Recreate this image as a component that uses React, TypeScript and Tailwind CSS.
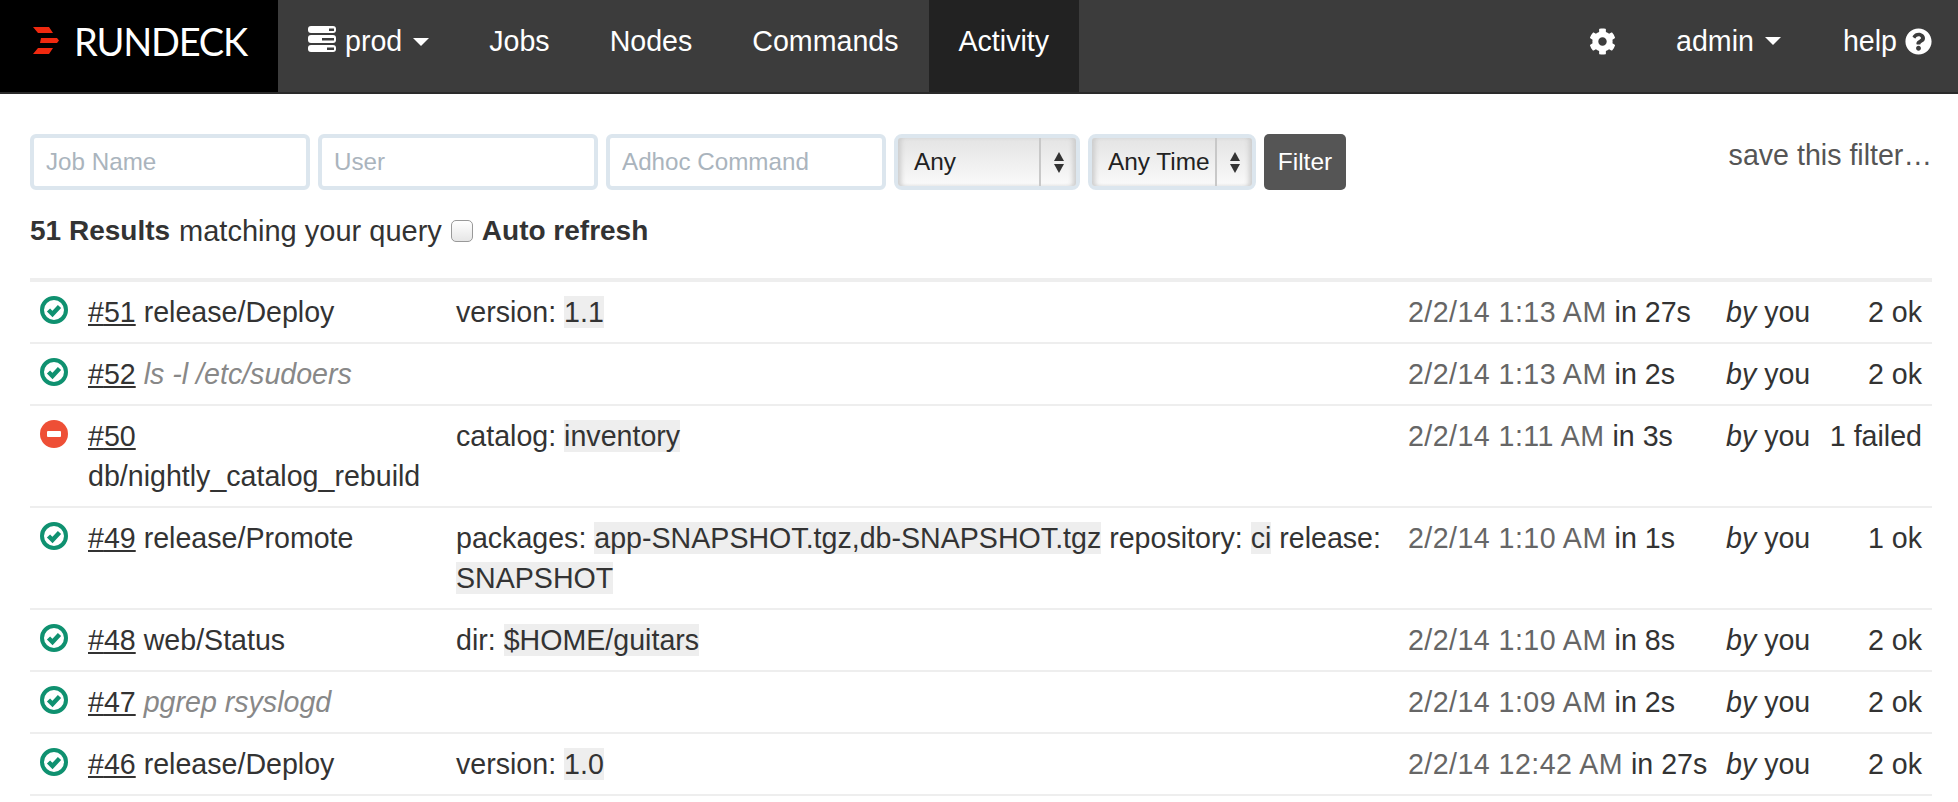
import { FaCog, FaQuestionCircle } from 'react-icons/fa';

const sans = { fontFamily: '"Liberation Sans", Arial, sans-serif' };

type Job = {
  id: number;
  name: string;
  adhoc?: boolean;
  failed?: boolean;
  params?: [string, string][];
  date: string;
  duration: string;
  status: string;
};

const jobs: Job[] = [
  { id: 51, name: 'release/Deploy', params: [['version', '1.1']], date: '2/2/14 1:13 AM', duration: '27s', status: '2 ok' },
  { id: 52, name: 'ls -l /etc/sudoers', adhoc: true, date: '2/2/14 1:13 AM', duration: '2s', status: '2 ok' },
  { id: 50, name: 'db/nightly_catalog_rebuild', failed: true, params: [['catalog', 'inventory']], date: '2/2/14 1:11 AM', duration: '3s', status: '1 failed' },
  {
    id: 49,
    name: 'release/Promote',
    params: [['packages', 'app-SNAPSHOT.tgz,db-SNAPSHOT.tgz'], ['repository', 'ci'], ['release', 'SNAPSHOT']],
    date: '2/2/14 1:10 AM',
    duration: '1s',
    status: '1 ok',
  },
  { id: 48, name: 'web/Status', params: [['dir', '$HOME/guitars']], date: '2/2/14 1:10 AM', duration: '8s', status: '2 ok' },
  { id: 47, name: 'pgrep rsyslogd', adhoc: true, date: '2/2/14 1:09 AM', duration: '2s', status: '2 ok' },
  { id: 46, name: 'release/Deploy', params: [['version', '1.0']], date: '2/2/14 12:42 AM', duration: '27s', status: '2 ok' },
];

function Logo() {
  return (
    <div className="flex h-full w-[278px] shrink-0 items-center bg-black pb-[11px] pl-[33px]">
      <svg width="26" height="27" viewBox="0 0 26 27" className="mr-[15px]">
        <path d="M0 0H16L20 6H5Z M8 11H24L26 13.5L24 16H7Z M5 21H20L16 27H0Z" fill="#f0290f" />
      </svg>
      <span className="text-[38px] leading-none tracking-[-1.2px] text-white" style={{ fontFamily: 'Lato, sans-serif' }}>
        RUNDECK
      </span>
    </div>
  );
}

function Caret() {
  return <span className="ml-[11px] inline-block h-0 w-0 border-x-[8px] border-t-[8px] border-x-transparent border-t-white" />;
}

function ServerIcon() {
  return (
    <svg width="28" height="26" viewBox="0 0 28 26" className="mr-[9px] -translate-y-[3px]">
      <g fill="#fff">
        <rect x="0" y="0" width="28" height="7" rx="3" />
        <rect x="0" y="9" width="28" height="8" rx="3" />
        <rect x="0" y="19" width="28" height="7" rx="3" />
      </g>
      <g fill="#3c3c3c">
        <rect x="21" y="2.5" width="5" height="2.5" />
        <rect x="14" y="12" width="12" height="2.5" />
        <rect x="19" y="21.5" width="7" height="2.5" />
      </g>
    </svg>
  );
}

function NavLink({ label, active }: { label: string; active?: boolean }) {
  return (
    <a className={`flex h-full items-center px-[30px] pb-[9px] ${active ? 'bg-[#222222]' : ''}`}>{label}</a>
  );
}

function Navbar() {
  return (
    <nav className="flex h-[94px] items-stretch border-b-2 border-[#2a2a2a] bg-[#3c3c3c] text-[28.6px] text-white">
      <Logo />
      <a className="flex h-full items-center px-[30px] pb-[9px]">
        <ServerIcon />
        prod
        <Caret />
      </a>
      <NavLink label="Jobs" />
      <NavLink label="Nodes" />
      <NavLink label="Commands" />
      <NavLink label="Activity" active />
      <div className="ml-auto flex h-full items-center pb-[9px]">
        <FaCog size={27} className="mr-[60px]" />
        <a className="mr-[62px] flex items-center">
          admin
          <Caret />
        </a>
        <a className="mr-[26px] flex items-center">
          help
          <FaQuestionCircle size={27} className="ml-[8px]" />
        </a>
      </div>
    </nav>
  );
}

function TextBox({ placeholder }: { placeholder: string }) {
  return (
    <input
      placeholder={placeholder}
      className="h-[56px] w-[280px] rounded-[6px] border-4 border-[#dce6ee] bg-white px-[12px] text-[24.2px] outline-none placeholder:text-[#aab4bd]"
    />
  );
}

function SelectBox({ label, width, divider }: { label: string; width: string; divider: string }) {
  return (
    <div className={`flex h-[56px] rounded-[8px] border-4 border-[#dce6ee] ${width}`}>
      <div className="flex flex-1 rounded-[3px] bg-gradient-to-b from-[#e4e4e4] to-[#fafafa] shadow-[inset_5px_0_5px_-2px_#ccc,inset_-5px_0_5px_-2px_#ccc]">
        <span className={`flex items-center border-r-2 border-[#c8c8c8] pl-[16px] text-[24.4px] text-[#222] ${divider}`}>{label}</span>
        <span className="flex flex-1 flex-col items-center justify-center gap-[3px]">
          <span className="h-0 w-0 border-x-[5px] border-b-[9px] border-x-transparent border-b-[#333]" />
          <span className="h-0 w-0 border-x-[5px] border-t-[9px] border-x-transparent border-t-[#333]" />
        </span>
      </div>
    </div>
  );
}

function FilterBar() {
  return (
    <div className="flex items-start gap-[8px]">
      <TextBox placeholder="Job Name" />
      <TextBox placeholder="User" />
      <TextBox placeholder="Adhoc Command" />
      <SelectBox label="Any" width="w-[186px]" divider="w-[143px]" />
      <SelectBox label="Any Time" width="w-[168px]" divider="w-[125px]" />
      <button className="h-[56px] w-[82px] rounded-[5px] bg-[#555555] text-[24.5px] text-white">Filter</button>
      <a className="ml-auto mt-[1px] text-[28.6px] leading-[40px] text-[#555]">save this filter…</a>
    </div>
  );
}

function StatusIcon({ failed }: { failed?: boolean }) {
  if (failed) {
    return (
      <svg width="28" height="28" viewBox="0 0 28 28" className="mt-[4px] shrink-0">
        <circle cx="14" cy="14" r="14" fill="#ee4f36" />
        <rect x="7" y="11" width="14" height="6" rx="1" fill="#fff" />
      </svg>
    );
  }
  return (
    <svg width="28" height="28" viewBox="0 0 28 28" className="mt-[4px] shrink-0">
      <circle cx="14" cy="14" r="12" fill="none" stroke="#0f9170" strokeWidth="4" />
      <path d="M8.5 14l4 4 7-7.5" fill="none" stroke="#0f9170" strokeWidth="4.5" />
    </svg>
  );
}

function JobRow({ job }: { job: Job }) {
  return (
    <div className="flex border-b-2 border-[#eeeeee] py-[10px] text-[28.6px] leading-[40px] text-[#333]">
      <div className="w-[58px] shrink-0 pl-[10px]">
        <StatusIcon failed={job.failed} />
      </div>
      <div className="w-[368px] shrink-0 pr-[20px]">
        <a className="underline">#{job.id}</a>{' '}
        <span className={job.adhoc ? 'text-[#888] italic' : ''}>{job.name}</span>
      </div>
      <div className="w-[952px] shrink-0 pr-[20px]">
        {job.params?.map(([key, value]) => (
          <span key={key}>
            {key}: <span className="bg-[#eeeeee]">{value}</span>{' '}
          </span>
        ))}
      </div>
      <div className="w-[318px] shrink-0">
        <span className="tracking-[0.45px] text-[#666]">{job.date}</span> in {job.duration}
      </div>
      <div className="shrink-0">
        <em>by</em> you
      </div>
      <div className="ml-auto pr-[10px] text-right">{job.status}</div>
    </div>
  );
}

export default function App() {
  return (
    <div className="min-h-screen overflow-hidden bg-white" style={sans}>
      <Navbar />
      <main className="px-[26px] pt-[40px]">
        <div className="ml-[4px]">
          <FilterBar />
          <div className="mt-[21px] flex items-center text-[29px] leading-[40px] text-[#333]">
            <b className="text-[28px]">51 Results</b>
            <span className="ml-[9px]">matching your query</span>
            <input
              type="checkbox"
              className="mx-[9px] h-[22px] w-[22px] appearance-none rounded-[5px] border border-[#999] bg-gradient-to-b from-white to-[#e6e6e6]"
            />
            <b className="text-[28px]">Auto refresh</b>
          </div>
          <div className="mt-[27px] border-t-4 border-[#eeeeee]">
            {jobs.map((job) => (
              <JobRow key={job.id} job={job} />
            ))}
          </div>
        </div>
      </main>
    </div>
  );
}
